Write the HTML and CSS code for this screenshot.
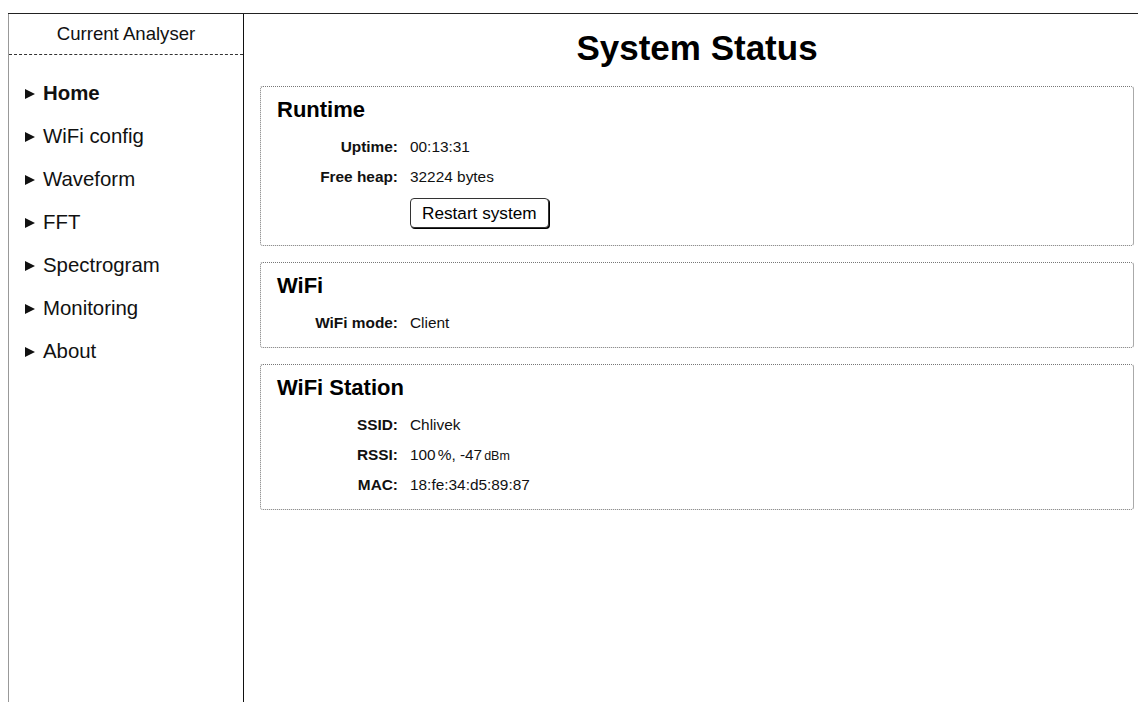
FILE: index.html
```html
<!DOCTYPE html>
<html lang="en">
<head>
<meta charset="utf-8">
<title>Current Analyser - System Status</title>
<link rel="stylesheet" href="styles.css">
</head>
<body>
<div class="app">
  <nav class="sidebar">
    <div class="brand">Current Analyser</div>
    <ul class="menu">
      <li class="menu-item active">Home</li>
      <li class="menu-item">WiFi config</li>
      <li class="menu-item">Waveform</li>
      <li class="menu-item">FFT</li>
      <li class="menu-item">Spectrogram</li>
      <li class="menu-item">Monitoring</li>
      <li class="menu-item">About</li>
    </ul>
  </nav>
  <main class="content">
    <h1 class="page-title">System Status</h1>

    <section class="panel">
      <h2 class="panel-title">Runtime</h2>
      <div class="fields">
        <div class="label">Uptime:</div><div class="value">00:13:31</div>
        <div class="label">Free heap:</div><div class="value">32224 bytes</div>
        <div class="label"></div><div class="value action"><button class="btn" type="button">Restart system</button></div>
      </div>
    </section>

    <section class="panel">
      <h2 class="panel-title">WiFi</h2>
      <div class="fields">
        <div class="label">WiFi mode:</div><div class="value">Client</div>
      </div>
    </section>

    <section class="panel">
      <h2 class="panel-title">WiFi Station</h2>
      <div class="fields">
        <div class="label">SSID:</div><div class="value">Chlivek</div>
        <div class="label">RSSI:</div><div class="value">100<span class="unit-sep">%</span>, -47<span class="unit">dBm</span></div>
        <div class="label">MAC:</div><div class="value">18:fe:34:d5:89:87</div>
      </div>
    </section>
  </main>
</div>
</body>
</html>
```
FILE: styles.css
```css
html, body {
  background: #fff;
}

body {
  margin: 13px 0 0 8px;
  font-family: "Liberation Sans", Arial, sans-serif;
  color: #111;
}

.app {
  display: flex;
  border-top: 1px solid #222;
  min-height: 689px;
}

/* Left navigation column */
.sidebar {
  width: 234px;
  flex: 0 0 auto;
  border-left: 1px solid #999;
  border-right: 1px solid #111;
}

.brand {
  height: 40px;
  line-height: 40px;
  text-align: center;
  font-size: 18.6px;
  border-bottom: 1px dashed #333;
}

.menu {
  list-style: none;
  margin: 0;
  padding: 17px 0 0 16px;
}

.menu-item {
  display: flex;
  align-items: center;
  height: 43px;
  font-size: 20.4px;
  color: #111;
}

.menu-item::before {
  content: "";
  width: 0;
  height: 0;
  border-top: 5px solid transparent;
  border-bottom: 5px solid transparent;
  border-left: 10px solid #111;
  margin-right: 8px;
}

.menu-item.active {
  font-weight: bold;
}

/* Main area */
.content {
  flex: 1 1 auto;
  padding: 0 4px 0 16px;
}

.page-title {
  margin: 14px 0 18px;
  line-height: 40px;
  font-size: 35px;
  font-weight: bold;
  text-align: center;
  color: #000;
}

.panel {
  border: 1px dotted #777;
  border-right: 1px solid #aaa;
  border-radius: 3px;
  padding: 10px 16px 9px;
  margin-bottom: 16px;
}

.panel-title {
  margin: 0 0 9px;
  font-size: 22px;
  line-height: 26px;
  font-weight: bold;
  color: #000;
}

.fields {
  display: grid;
  grid-template-columns: 121px 1fr;
  column-gap: 12px;
  font-size: 15.4px;
}

.label,
.value {
  height: 30px;
  line-height: 30px;
}

.label {
  text-align: right;
  font-weight: bold;
}

.value.action {
  height: auto;
  padding: 6px 0 8px;
}

.unit-sep {
  margin-left: 2px;
}

.unit {
  margin-left: 2px;
  font-size: 12.5px;
}

.btn {
  display: block;
  height: 30px;
  padding: 0 11px;
  font-family: "Liberation Sans", Arial, sans-serif;
  font-size: 17.2px;
  color: #000;
  background: #fff;
  border: 1px solid #333;
  border-radius: 4px;
  box-shadow: 1px 1px 0 #000;
}
```
